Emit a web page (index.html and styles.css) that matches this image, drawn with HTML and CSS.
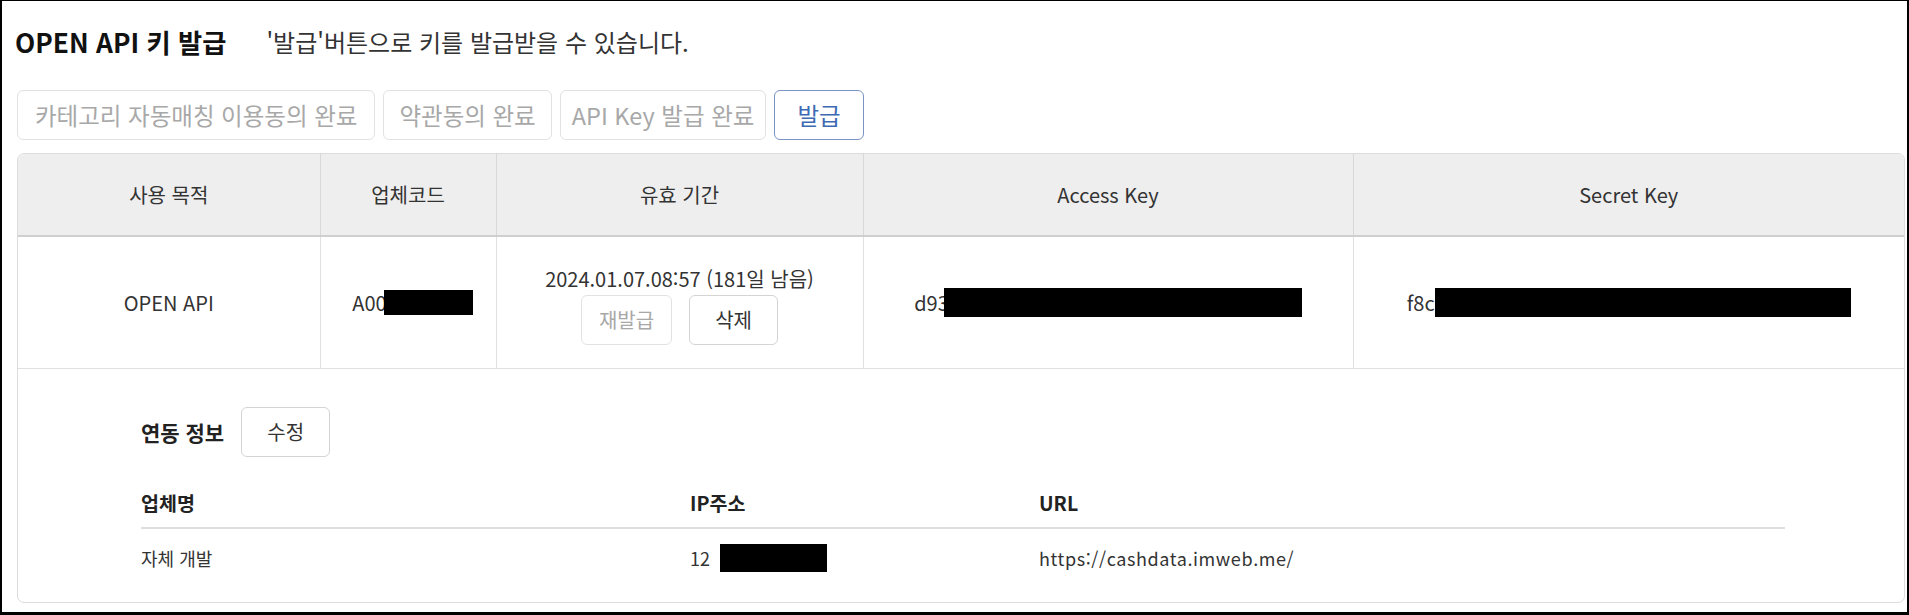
FILE: index.html
```html
<!DOCTYPE html>
<html lang="ko">
<head>
<meta charset="utf-8">
<title>OPEN API 키 발급</title>
<link rel="stylesheet" href="styles.css">
</head>
<body>
<div class="frame">
  <div class="title-row">
    <h1 class="title">OPEN API 키 발급</h1>
    <p class="subtitle">'발급'버튼으로 키를 발급받을 수 있습니다.</p>
  </div>
  <div class="steps">
    <button class="btn btn-step btn-off btn-wide">카테고리 자동매칭 이용동의 완료</button>
    <button class="btn btn-step btn-off">약관동의 완료</button>
    <button class="btn btn-step btn-off btn-tight">API Key 발급 완료</button>
    <button class="btn btn-step btn-primary">발급</button>
  </div>
  <div class="card">
    <table class="keys">
      <colgroup>
        <col class="c1"><col class="c2"><col class="c3"><col class="c4"><col class="c5">
      </colgroup>
      <thead>
        <tr>
          <th>사용 목적</th>
          <th>업체코드</th>
          <th>유효 기간</th>
          <th>Access Key</th>
          <th>Secret Key</th>
        </tr>
      </thead>
      <tbody>
        <tr>
          <td>OPEN API</td>
          <td class="code"><span class="val">A00<span class="mask m-code"></span></span></td>
          <td class="period">
            <div class="date">2024.01.07.08:57 (181일 남음)</div>
            <div class="row-actions">
              <button class="btn btn-sm btn-off">재발급</button>
              <button class="btn btn-sm">삭제</button>
            </div>
          </td>
          <td><span class="val">d93<span class="mask m-access"></span></span></td>
          <td><span class="val">f8c<span class="mask m-secret"></span></span></td>
        </tr>
      </tbody>
    </table>
    <div class="link-info">
      <div class="link-head">
        <span class="link-label">연동 정보</span>
        <button class="btn btn-sm">수정</button>
      </div>
      <table class="links">
        <colgroup><col class="l1"><col class="l2"><col class="l3"></colgroup>
        <thead>
          <tr><th>업체명</th><th>IP주소</th><th>URL</th></tr>
        </thead>
        <tbody>
          <tr>
            <td>자체 개발</td>
            <td><span class="val">12<span class="mask m-ip"></span></span></td>
            <td class="url">https://cashdata.imweb.me/</td>
          </tr>
        </tbody>
      </table>
    </div>
  </div>
</div>
</body>
</html>
```

FILE: styles.css
```css
* { box-sizing: border-box; }
html, body { margin: 0; padding: 0; background: #fff; }
body {
  font-family: "Noto Sans CJK KR", "Noto Sans", sans-serif;
  color: #333;
}
.frame {
  width: 1909px;
  height: 615px;
  border-style: solid;
  border-color: #000;
  border-width: 1px 2px 3px 2px;
  display: flex;
  flex-direction: column;
  padding: 0 2px 0 13px;
}
.title-row {
  display: flex;
  align-items: center;
  gap: 40px;
  height: 80px;
}
.title {
  margin: 0;
  font-size: 26.3px;
  font-weight: 700;
  color: #111;
}
.subtitle {
  margin: 0;
  font-size: 24px;
  color: #333;
}
.steps {
  display: flex;
  gap: 8px;
  margin-top: 9px;
  margin-left: 2px;
}
.btn {
  font-family: inherit;
  font-size: 20px;
  height: 50px;
  padding: 0 17px;
  background: #fff;
  border: 1px solid #d4d4d4;
  border-radius: 6px;
  color: #333;
}
.btn-step {
  font-size: 23.5px;
  padding: 0 15px;
}
.btn-step.btn-wide { padding: 0 17px; }
.btn-step.btn-tight { padding: 0 11px; }
.btn-off { color: #a8a8a8; border-color: #e2e2e2; }
.btn-step.btn-primary {
  color: #3d6ab3;
  border-color: #7a94c4;
  padding: 0 22px;
}
.btn-sm { min-width: 89px; }
.card {
  margin: 13px 0 9px 2px;
  flex: 1;
  border: 1px solid #dcdcdc;
  border-radius: 7px;
  overflow: hidden;
  display: flex;
  flex-direction: column;
}
.keys {
  width: 100%;
  border-collapse: collapse;
  table-layout: fixed;
}
.c1 { width: 302px; }
.c2 { width: 176px; }
.c3 { width: 367px; }
.c4 { width: 490px; }
.keys th {
  height: 82px;
  background: #eeeeee;
  font-weight: 400;
  font-size: 20px;
  color: #333;
  border-right: 1px solid #d8d8d8;
  border-bottom: 2px solid #cfcfcf;
}
.keys td {
  height: 132px;
  text-align: center;
  font-size: 20px;
  color: #333;
  border-right: 1px solid #e0e0e0;
  border-bottom: 1px solid #e0e0e0;
}
.keys th:last-child, .keys td:last-child { border-right: 0; }
.keys td.period { padding-top: 6px; }
.keys td.code { padding-left: 10px; }
.val { display: inline-flex; align-items: center; }
.mask { display: inline-block; background: #000; }
.m-code { width: 89px; height: 25px; margin-left: -3px; }
.m-access { width: 358px; height: 29px; margin-left: -5px; }
.m-secret { width: 416px; height: 29px; margin-left: 0; }
.m-ip { width: 107px; height: 28px; margin-left: 10px; }
.date { line-height: 28px; }
.row-actions {
  display: flex;
  justify-content: center;
  gap: 17px;
  margin-top: 2px;
}
.link-info {
  padding: 38px 0 0 123px;
}
.link-head {
  display: flex;
  align-items: center;
  gap: 17px;
}
.link-label {
  font-size: 21px;
  font-weight: 700;
  color: #222;
}
.links {
  width: 1644px;
  border-collapse: collapse;
  table-layout: fixed;
  margin-top: 21px;
}
.l1 { width: 549px; }
.l2 { width: 349px; }
.links th {
  text-align: left;
  font-size: 19.5px;
  font-weight: 700;
  color: #222;
  height: 50px;
  padding: 0;
  border-bottom: 2px solid #dedede;
}
.links td {
  font-size: 18px;
  color: #333;
  height: 60px;
  padding: 0;
  vertical-align: middle;
}
.links td.url { letter-spacing: 0.6px; }
```
